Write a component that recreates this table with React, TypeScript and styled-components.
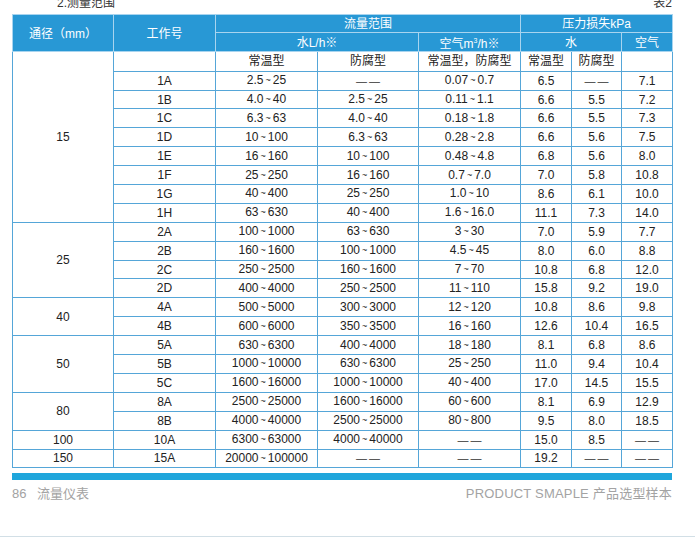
import React from "react";
import styled, { createGlobalStyle } from "styled-components";

const GlobalStyle = createGlobalStyle`
  html, body { margin: 0; padding: 0; background: #ffffff; }
  body { font-family: "Liberation Sans", Arial, "Noto Sans CJK SC", sans-serif; }
`;

const Page = styled.div`
  width: 695px;
  height: 537px;
  box-sizing: border-box;
  border-bottom: 1px solid #d2dfe6;
  overflow: hidden;
`;

const Sheet = styled.div`
  width: 660px;
  margin-left: 12px;
  display: flex;
  flex-direction: column;
`;

const TopLine = styled.div`
  height: 14px;
  display: flex;
  justify-content: space-between;
  align-items: flex-start;
  font-size: 12px;
  line-height: 12px;
  color: #333;
  font-family: "Liberation Sans", "Noto Sans CJK SC", sans-serif;
`;

const Caption = styled.span<{ $indent?: number }>`
  margin-top: -3px;
  padding-left: ${(p) => p.$indent ?? 0}px;
`;

const Table = styled.table`
  width: 660px;
  border-collapse: collapse;
  table-layout: fixed;
  font-size: 12px;
  color: #222;
  font-family: "Liberation Sans", Arial, "Noto Sans CJK SC", sans-serif;
`;

const HeadCell = styled.th<{ $h: number }>`
  background: #2898d5;
  color: #ffffff;
  font-weight: normal;
  font-size: 12px;
  line-height: 14px;
  border: 1px solid #a8d4ef;
  height: ${(p) => p.$h}px;
  padding: 1px 0 0;
  text-align: center;
  vertical-align: middle;
  white-space: nowrap;
  font-family: "Liberation Sans", "Noto Sans CJK SC", sans-serif;
`;

const Cell = styled.td<{ $h: number }>`
  border: 1px solid #55a6d8;
  height: ${(p) => p.$h}px;
  padding: 0;
  text-align: center;
  vertical-align: middle;
  white-space: nowrap;
  line-height: 14px;
`;

const Tilde = styled.span`
  font-size: 9px;
  margin: 0 2px;
  position: relative;
  top: -1px;
`;

const Dash = styled.span`
  font-family: "Liberation Sans", Arial, sans-serif;
  font-size: 11px;
  letter-spacing: 2px;
  margin-right: -2px;
  color: #333;
`;

const Sup = styled.sup`
  font-size: 7px;
`;

const Bar = styled.div`
  height: 7px;
  background: #1fa6dc;
  margin-top: 5px;
`;

const Footer = styled.div`
  display: flex;
  justify-content: space-between;
  align-items: center;
  height: 24px;
  font-size: 13px;
  color: #a3a3a3;
  font-family: "Liberation Sans", "Noto Sans CJK SC", sans-serif;
`;

const FooterLeft = styled.span`
  word-spacing: 7px;
`;

const FooterRight = styled.span`
  letter-spacing: 0.2px;
`;

type Row = [string, string, string, string, string, string, string];
type Group = { dn: string; rows: Row[] };

const groups: Group[] = [
  {
    dn: "15",
    rows: [
      ["1A", "2.5~25", "-", "0.07~0.7", "6.5", "-", "7.1"],
      ["1B", "4.0~40", "2.5~25", "0.11~1.1", "6.6", "5.5", "7.2"],
      ["1C", "6.3~63", "4.0~40", "0.18~1.8", "6.6", "5.5", "7.3"],
      ["1D", "10~100", "6.3~63", "0.28~2.8", "6.6", "5.6", "7.5"],
      ["1E", "16~160", "10~100", "0.48~4.8", "6.8", "5.6", "8.0"],
      ["1F", "25~250", "16~160", "0.7~7.0", "7.0", "5.8", "10.8"],
      ["1G", "40~400", "25~250", "1.0~10", "8.6", "6.1", "10.0"],
      ["1H", "63~630", "40~400", "1.6~16.0", "11.1", "7.3", "14.0"],
    ],
  },
  {
    dn: "25",
    rows: [
      ["2A", "100~1000", "63~630", "3~30", "7.0", "5.9", "7.7"],
      ["2B", "160~1600", "100~1000", "4.5~45", "8.0", "6.0", "8.8"],
      ["2C", "250~2500", "160~1600", "7~70", "10.8", "6.8", "12.0"],
      ["2D", "400~4000", "250~2500", "11~110", "15.8", "9.2", "19.0"],
    ],
  },
  {
    dn: "40",
    rows: [
      ["4A", "500~5000", "300~3000", "12~120", "10.8", "8.6", "9.8"],
      ["4B", "600~6000", "350~3500", "16~160", "12.6", "10.4", "16.5"],
    ],
  },
  {
    dn: "50",
    rows: [
      ["5A", "630~6300", "400~4000", "18~180", "8.1", "6.8", "8.6"],
      ["5B", "1000~10000", "630~6300", "25~250", "11.0", "9.4", "10.4"],
      ["5C", "1600~16000", "1000~10000", "40~400", "17.0", "14.5", "15.5"],
    ],
  },
  {
    dn: "80",
    rows: [
      ["8A", "2500~25000", "1600~16000", "60~600", "8.1", "6.9", "12.9"],
      ["8B", "4000~40000", "2500~25000", "80~800", "9.5", "8.0", "18.5"],
    ],
  },
  { dn: "100", rows: [["10A", "6300~63000", "4000~40000", "-", "15.0", "8.5", "-"]] },
  { dn: "150", rows: [["15A", "20000~100000", "-", "-", "19.2", "-", "-"]] },
];

const widths = [101, 102, 102, 101, 102, 51, 50, 51];
const ROW_H = 17.9;
const SUB_H = 18.7;

function Value({ v }: { v: string }) {
  if (v === "-") return <Dash>——</Dash>;
  const parts = v.split("~");
  if (parts.length === 2)
    return (
      <>
        {parts[0]}
        <Tilde>~</Tilde>
        {parts[1]}
      </>
    );
  return <>{v}</>;
}

export default function App() {
  return (
    <>
      <GlobalStyle />
      <Page>
        <Sheet>
          <TopLine>
            <Caption $indent={45}>2.测量范围</Caption>
            <Caption>表2</Caption>
          </TopLine>
          <Table>
            <colgroup>
              {widths.map((w, i) => (
                <col key={i} style={{ width: w }} />
              ))}
            </colgroup>
            <thead>
              <tr>
                <HeadCell $h={16} rowSpan={2}>通径（mm）</HeadCell>
                <HeadCell $h={16} rowSpan={2}>工作号</HeadCell>
                <HeadCell $h={16} colSpan={3}>流量范围</HeadCell>
                <HeadCell $h={16} colSpan={3}>压力损失kPa</HeadCell>
              </tr>
              <tr>
                <HeadCell $h={17} colSpan={2}>水L/h※</HeadCell>
                <HeadCell $h={17}>
                  空气m<Sup>3</Sup>/h※
                </HeadCell>
                <HeadCell $h={17} colSpan={2}>水</HeadCell>
                <HeadCell $h={17}>空气</HeadCell>
              </tr>
            </thead>
            <tbody>
              {groups.map((g, gi) =>
                [
                  gi === 0 ? (
                    <tr key="sub">
                      <Cell $h={SUB_H} rowSpan={g.rows.length + 1}>
                        {g.dn}
                      </Cell>
                      <Cell $h={SUB_H}></Cell>
                      <Cell $h={SUB_H}>常温型</Cell>
                      <Cell $h={SUB_H}>防腐型</Cell>
                      <Cell $h={SUB_H}>常温型，防腐型</Cell>
                      <Cell $h={SUB_H}>常温型</Cell>
                      <Cell $h={SUB_H}>防腐型</Cell>
                      <Cell $h={SUB_H}></Cell>
                    </tr>
                  ) : null,
                  ...g.rows.map((r, ri) => (
                    <tr key={r[0]}>
                      {gi !== 0 && ri === 0 ? (
                        <Cell $h={ROW_H} rowSpan={g.rows.length}>
                          {g.dn}
                        </Cell>
                      ) : null}
                      {r.map((v, ci) => (
                        <Cell $h={ROW_H} key={ci}>
                          <Value v={v} />
                        </Cell>
                      ))}
                    </tr>
                  )),
                ]
              )}
            </tbody>
          </Table>
          <Bar />
          <Footer>
            <FooterLeft>86 流量仪表</FooterLeft>
            <FooterRight>PRODUCT SMAPLE 产品选型样本</FooterRight>
          </Footer>
        </Sheet>
      </Page>
    </>
  );
}
